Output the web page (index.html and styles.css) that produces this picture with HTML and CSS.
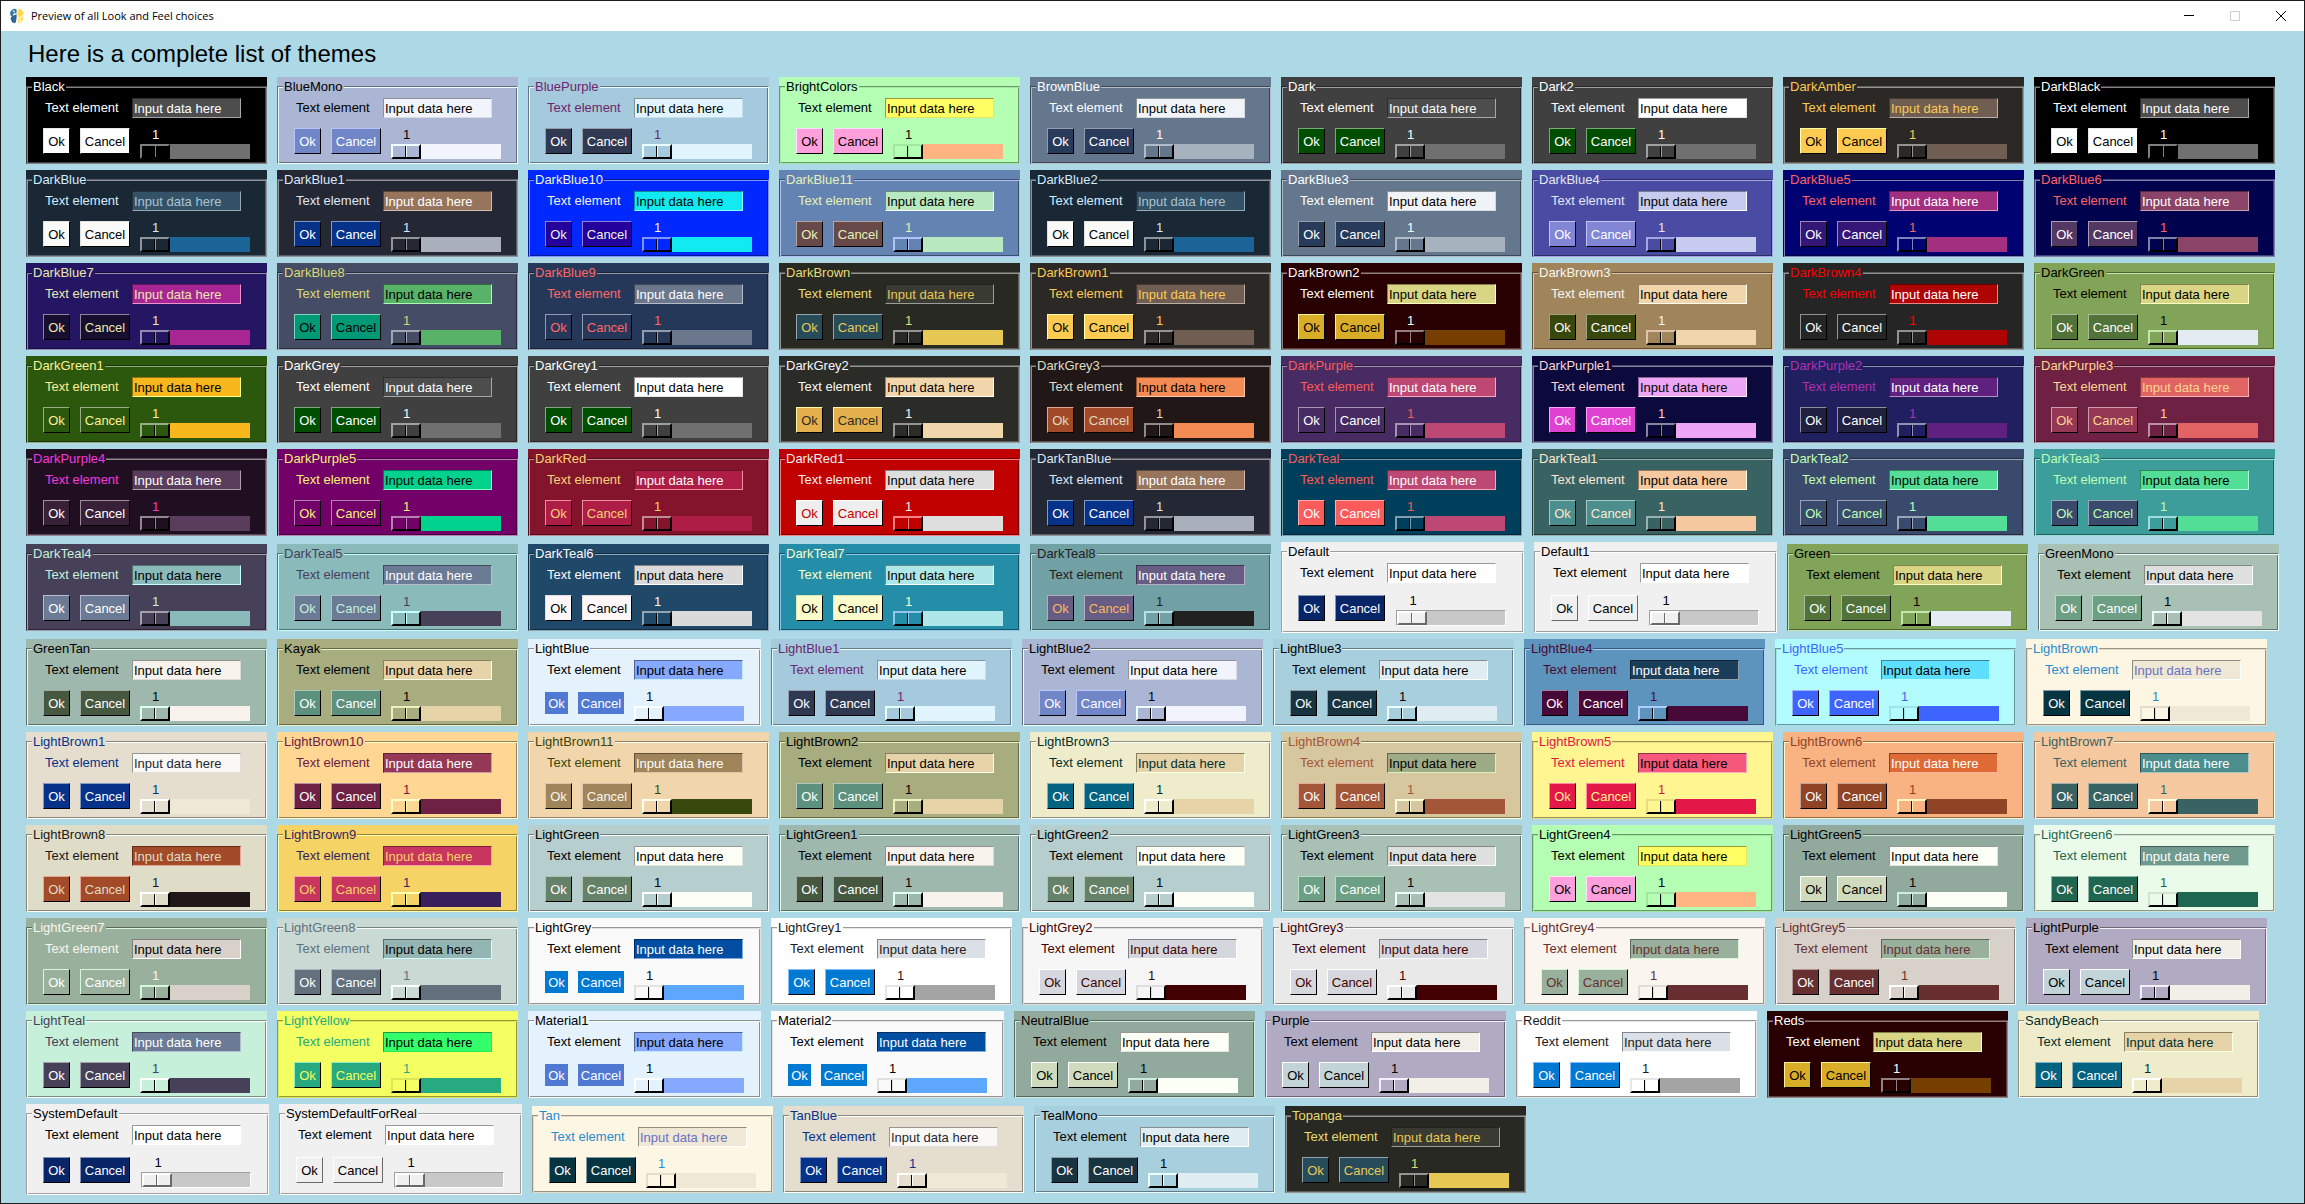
FILE: index.html
```html
<!DOCTYPE html>
<html lang="en">
<head>
<meta charset="utf-8">
<meta name="viewport" content="width=device-width, initial-scale=1">
<title>Preview of all Look and Feel choices</title>
<link rel="stylesheet" href="styles.css">
</head>
<body>
<div class="window">
  <header class="titlebar">
    <svg class="titlebar-logo" viewBox="0 0 16 16" width="16" height="16" aria-hidden="true">
      <path d="M7.6 1.6V5.2H4.8L3.6 8.6 1.8 8C.6 5.400 .8 3 3.200 2 4.600 .6 6.600 .4 7.600 1.600Z" fill="#3a76a8"/>
      <path d="M2.600 8.600 7.600 6V10L6.800 14.600C4.800 15.600 2.400 14.800 2.200 12 1.200 11 1.600 9.400 2.600 8.600Z" fill="#2f6593"/>
      <path d="M8.600 2C10.400 .4 13 1 13.400 3.200 15 4.200 15 6.400 13.600 7.400L8.600 9.600V5.600Z" fill="#ffd94a"/>
      <path d="M8.600 10.400 13.600 8C15 9.200 14.800 11.400 13.800 12.200 13.400 14.600 10.600 15.800 8.600 14.200Z" fill="#ffe375"/>
      <circle cx="5" cy="3.400" r=".8" fill="#fff"/>
      <circle cx="11" cy="12.800" r=".8" fill="#fff"/>
    </svg>
    <span class="titlebar-text">Preview of all Look and Feel choices</span>
    <button class="titlebar-button" type="button" aria-label="Minimize">
      <svg viewBox="0 0 10 10" width="10" height="10"><path d="M0 4.500H10" stroke="#000"/></svg>
    </button>
    <button class="titlebar-button" type="button" aria-label="Maximize" disabled>
      <svg viewBox="0 0 10 10" width="10" height="10"><path d="M.5 .5H9.500V9.500H.5Z" fill="none" stroke="#ccc"/></svg>
    </button>
    <button class="titlebar-button" type="button" aria-label="Close">
      <svg viewBox="0 0 10 10" width="10" height="10"><path d="M0 0 10 10M10 0 0 10" stroke="#000"/></svg>
    </button>
  </header>
  <main class="content">
    <h1 class="heading">Here is a complete list of themes</h1>
    <div class="themes" id="themes"></div>
  </main>
</div>
<script src="themes.js"></script>
</body>
</html>
```
FILE: styles.css
```css
* {
  box-sizing: border-box;
}

body {
  margin: 0;
  font-family: "Liberation Sans", Arial, sans-serif;
  font-size: 13px;
  color: #000;
}

.window {
  display: flex;
  flex-direction: column;
  min-height: 100vh;
  border: 1px solid #1c1c1c;
  background: #add8e6;
}

/* Title bar */

.titlebar {
  display: flex;
  align-items: center;
  height: 30px;
  padding-left: 8px;
  background: #fff;
}

.titlebar-logo {
  flex: none;
}

.titlebar-text {
  flex: 1;
  padding-left: 6px;
  font-family: "Open Sans", "Segoe UI", sans-serif;
  font-size: 11px;
  line-height: 16px;
}

.titlebar-button {
  display: flex;
  align-items: center;
  justify-content: center;
  width: 46px;
  height: 30px;
  padding: 0;
  border: 0;
  background: none;
}

/* Page */

.content {
  padding: 0 25px 8px;
}

.heading {
  margin: 0;
  padding: 8px 0 8px 2px;
  font-size: 24px;
  font-weight: 400;
  line-height: 30px;
}

.themes {
  display: flex;
  flex-direction: column;
  gap: 6px;
}

.theme-row {
  display: flex;
  flex-wrap: wrap;
  align-items: center;
  gap: 6px 10px;
}

/* Theme preview */

.card {
  background: var(--bg);
  color: var(--text);
}

.frame {
  min-width: 0;
  margin: 0;
  padding: 3px 16px 4px 5px;
  border: 1px solid;
  border-color: var(--bg-dark) var(--bg-light) var(--bg-light) var(--bg-dark);
  box-shadow: inset 1px 1px var(--bg-light), inset -1px -1px var(--bg-dark);
}

.frame-title {
  padding: 1px 1px 0;
  line-height: 17px;
  background: var(--bg);
}

.field {
  display: flex;
  align-items: center;
  padding-left: 13px;
}

.field-label {
  width: 77px;
  margin-right: 10px;
  line-height: 20px;
}

.field-input {
  width: 109px;
  height: 20px;
  padding: 0 1px;
  border: 1px solid;
  border-color: var(--input-dark) var(--input-light) var(--input-light) var(--input-dark);
  border-radius: 0;
  background: var(--input);
  color: var(--input-text);
  font: inherit;
  outline: 0;
}

.controls {
  display: flex;
  align-items: center;
  gap: 10px;
  padding-left: 11px;
  margin-top: 5px;
}

.button {
  height: 26px;
  padding: 0;
  border: 1px solid;
  border-color: var(--button-light) var(--button-shade) var(--button-shade) var(--button-light);
  background: var(--button);
  color: var(--button-text);
  font: inherit;
  text-align: center;
}

.button-ok {
  width: 27px;
}

.button-cancel {
  width: 50px;
}

.card-flat .button {
  height: 22px;
  border: 0;
}

.card-flat .button-ok {
  width: 23px;
}

.card-flat .button-cancel {
  width: 46px;
}

/* Slider */

.scale {
  display: flex;
  flex-direction: column;
  padding-top: 2px;
}

.scale-value {
  width: 31px;
  line-height: 19px;
  text-align: center;
}

.scale-input {
  width: 110px;
  height: 15px;
  margin: 0;
  appearance: none;
  background: var(--scroll);
  outline: 0;
}

.scale-input::-webkit-slider-thumb {
  appearance: none;
  width: 30px;
  height: 15px;
  border: 2px solid;
  border-color: var(--bg-light) var(--thumb-shade) var(--thumb-shade) var(--bg-light);
  background:
    linear-gradient(90deg, transparent 12px, var(--thumb-shade) 12px 13px, var(--bg-light) 13px 14px, transparent 14px)
    var(--bg);
}

.card-system .scale {
  padding: 3px 1px 2px;
}

.card-system .scale-value {
  width: 34px;
}

.card-system .scale-input {
  height: 16px;
  border: 1px solid;
  border-color: var(--bg-dark) var(--bg-light) var(--bg-light) var(--bg-dark);
}

.card-system .scale-input::-webkit-slider-thumb {
  height: 14px;
}
```
FILE: themes.js
```js
// name, background, text, input, input text, slider trough, button text, button, [style]
const THEMES = `
Black #000000 #ffffff #4d4d4d #ffffff #707070 #000000 #ffffff
BlueMono #aab6d3 #000000 #f1f4fc #000000 #f1f4fc #ffffff #7186c7
BluePurple #a5cadd #6e266e #e0f5ff #000000 #e0f5ff #ffffff #303952
BrightColors #b4ffb4 #000000 #ffff64 #000000 #ffb482 #000000 #ffa0dc
BrownBlue #64778d #ffffff #f0f3f7 #000000 #a6b2be #ffffff #283b5b
Dark #404040 #ffffff #4d4d4d #ffffff #707070 #ffffff #004f00
Dark2 #404040 #ffffff #ffffff #000000 #707070 #ffffff #004f00
DarkAmber #2c2825 #fdcb52 #705e52 #fdcb52 #705e52 #000000 #fdcb52
DarkBlack #000000 #ffffff #4d4d4d #ffffff #707070 #000000 #ffffff
DarkBlue #1a2835 #d1ecff #335267 #acc2d0 #1b6497 #000000 #fafaf8
DarkBlue1 #242834 #dfe6f8 #97755c #ffffff #a9afbb #ffffff #063289
DarkBlue10 #0028ff #f1f4df #10eaf0 #000000 #10eaf0 #f1f4df #24009c
DarkBlue11 #6384b3 #e6f0b6 #b8e9c0 #000000 #b8e9c0 #e6f0b6 #684949
DarkBlue2 #1a2835 #d1ecff #335267 #acc2d0 #1b6497 #000000 #fafaf8
DarkBlue3 #64778d #ffffff #f0f3f7 #000000 #a6b2be #ffffff #283b5b
DarkBlue4 #494ca2 #e3e7f1 #c6cbef #000000 #c6cbef #ffffff #8186d5
DarkBlue5 #000272 #ff6363 #a32f80 #ffffff #a32f80 #ffffff #341677
DarkBlue6 #01024e #ff6464 #8b4367 #ffffff #8b4367 #ffffff #543864
DarkBlue7 #241663 #eae7af #a72693 #eae7af #a72693 #eae7af #160f30
DarkBlue8 #454d66 #d9d872 #58b368 #000000 #58b368 #000000 #009975
DarkBlue9 #263859 #ff6768 #6b778d #ffffff #6b778d #ff6768 #263859
DarkBrown #282923 #e7db74 #393a32 #e7c855 #e7c855 #e7c855 #284b5a
DarkBrown1 #2c2825 #fdcb52 #705e52 #fdcb52 #705e52 #000000 #fdcb52
DarkBrown2 #280001 #ffffff #d8d584 #000000 #763e00 #000000 #daad28
DarkBrown3 #a0855b #f9f6f2 #f1d6ab #000000 #f1d6ab #ffffff #38470b
DarkBrown4 #252525 #ff0000 #af0404 #ffffff #af0404 #ffffff #252525
DarkGreen #82a459 #000000 #d8d584 #000000 #e3ecf3 #ffffff #517239
DarkGreen1 #2b580c #fdef96 #f7b71d #000000 #f7b71d #fdef96 #2b580c
DarkGrey #404040 #ffffff #4d4d4d #ffffff #707070 #ffffff #004f00
DarkGrey1 #404040 #ffffff #ffffff #000000 #707070 #ffffff #004f00
DarkGrey2 #2b2b28 #f8f8f8 #f1d6ab #000000 #f1d6ab #2b2b28 #e3b04b
DarkGrey3 #211717 #dfddc7 #f58b54 #000000 #f58b54 #dfddc7 #a34a28
DarkPurple #472b62 #fb5b5a #bc4873 #ffffff #bc4873 #ffffff #472b62
DarkPurple1 #0c093c #fad6d6 #eea5f6 #000000 #eea5f6 #ffffff #df42d1
DarkPurple2 #202060 #b030b0 #602080 #ffffff #602080 #ffffff #202040
DarkPurple3 #6e2142 #ffd692 #e16363 #ffd692 #e16363 #ffd692 #943855
DarkPurple4 #200f21 #f638dc #5a3d5c #ffffff #5a3d5c #ffffff #382039
DarkPurple5 #730068 #f6f078 #01d28e #000000 #01d28e #f6f078 #730068
DarkRed #83142c #f9d276 #ad1d45 #ffffff #ad1d45 #f9d276 #ad1d45
DarkRed1 #c10000 #eeeeee #dedede #000000 #dedede #c10000 #eeeeee
DarkTanBlue #242834 #dfe6f8 #97755c #ffffff #a9afbb #ffffff #063289
DarkTeal #003f5c #fb5b5a #bc4873 #ffffff #bc4873 #ffffff #fb5b5a
DarkTeal1 #396362 #ffe7d1 #f6c89f #000000 #f6c89f #ffe7d1 #4b8e8d
DarkTeal2 #394a6d #c0ffb3 #52de97 #000000 #52de97 #c0ffb3 #394a6d
DarkTeal3 #3c9d9b #c0ffb3 #52de97 #000000 #52de97 #c0ffb3 #394a6d
DarkTeal4 #464159 #c7f0db #8bbabb #000000 #8bbabb #ffffff #6c7b95
DarkTeal5 #8bbabb #464159 #6c7b95 #ffffff #464159 #c7f0db #6c7b95
DarkTeal6 #204969 #fff7f7 #dadada #000000 #dadada #000000 #fff7f7
DarkTeal7 #248ea9 #fafdcb #aee7e8 #000000 #aee7e8 #000000 #fafdcb
DarkTeal8 #71a0a5 #212121 #665c84 #ffffff #212121 #fab95b #665c84
Default #f0f0f0 #000000 #ffffff #000000 #c8c8c8 #ffffff #082567 system
Default1 #f0f0f0 #000000 #ffffff #000000 #c8c8c8 #000000 #f0f0f0 system
Green #82a459 #000000 #d8d584 #000000 #e3ecf3 #ffffff #517239
GreenMono #a8c1b4 #000000 #dde0de #000000 #e3e3e3 #ffffff #6d9f85
GreenTan #9fb8ad #000000 #f7f3ec #000000 #f7f3ec #ffffff #475841
Kayak #a7ad7f #000000 #e6d3a8 #000000 #e6d3a8 #ffffff #5d907d
LightBlue #e3f2fd #000000 #86a8ff #000000 #86a8ff #ffffff #5079d3 flat
LightBlue1 #a5cadd #6e266e #e0f5ff #000000 #e0f5ff #ffffff #303952
LightBlue2 #aab6d3 #000000 #f1f4fc #000000 #f1f4fc #ffffff #7186c7
LightBlue3 #a8cfdd #000000 #dfedf2 #000000 #dfedf2 #ffffff #183440
LightBlue4 #5c94bd #470938 #1a3e59 #ffffff #470938 #ffffff #470938
LightBlue5 #b2fcff #3e64ff #5edfff #000000 #3e64ff #ffffff #3e64ff
LightBrown #fdf6e3 #268bd1 #eee8d5 #6c71c3 #eee8d5 #ffffff #063542
LightBrown1 #e5dece #063289 #f9f8f4 #242834 #eee8d5 #ffffff #063289
LightBrown10 #ffd692 #6e2142 #943855 #ffffff #6e2142 #ffffff #6e2142
LightBrown11 #f1d6ab #38470b #a0855b #ffffff #38470b #f9f6f2 #a0855b
LightBrown2 #a7ad7f #000000 #e6d3a8 #000000 #e6d3a8 #ffffff #5d907d
LightBrown3 #efeccb #012f2f #e6d3a8 #012f2f #e6d3a8 #ffffff #046380
LightBrown4 #d7c79e #a35638 #9dab86 #000000 #a35638 #ffffff #a35638
LightBrown5 #fff591 #e41749 #f5587b #000000 #e41749 #fff591 #e41749
LightBrown6 #f9b282 #8f4426 #de6b35 #ffffff #8f4426 #ffffff #8f4426
LightBrown7 #f6c89f #396362 #4b8e8d #ffffff #396362 #ffffff #396362
LightBrown8 #dfddc7 #211717 #a34a28 #dfddc7 #211717 #dfddc7 #a34a28
LightBrown9 #f6d365 #3a1f5d #c83660 #f6d365 #3a1f5d #f6d365 #c83660
LightGreen #b7cece #000000 #fdfff7 #000000 #fdfff7 #ffffff #658268
LightGreen1 #9fb8ad #000000 #f7f3ec #000000 #f7f3ec #ffffff #475841
LightGreen2 #b7cece #000000 #fdfff7 #000000 #fdfff7 #ffffff #658268
LightGreen3 #a8c1b4 #000000 #dde0de #000000 #e3e3e3 #ffffff #6d9f85
LightGreen4 #b4ffb4 #000000 #ffff64 #000000 #ffb482 #000000 #ffa0dc
LightGreen5 #92aa9d #000000 #fcfff6 #000000 #fcfff6 #000000 #d0dbbd
LightGreen6 #eafbea #1f6650 #6f9a8d #ffffff #1f6650 #ffffff #1f6650
LightGreen7 #99b19c #faf5ef #d7d1c9 #000000 #d7d1c9 #ffffff #99b19c
LightGreen8 #c8dad3 #63707e #93b5b3 #000000 #63707e #ffffff #63707e
LightGrey #fafafa #000000 #004ea1 #ffffff #5ea7ff #ffffff #0079d3 flat
LightGrey1 #ffffff #1a1a1b #dae0e6 #222222 #a5a4a4 #ffffff #0079d3
LightGrey2 #f6f6f6 #420000 #d4d7dd #420000 #420000 #420000 #d4d7dd
LightGrey3 #eae9e9 #420000 #d4d7dd #420000 #420000 #420000 #d4d7dd
LightGrey4 #faf5ef #672f2f #99b19c #672f2f #672f2f #672f2f #99b19c
LightGrey5 #d7d1c9 #672f2f #99b19c #672f2f #672f2f #ffffff #672f2f
LightPurple #b0aac2 #000000 #f2efe8 #000000 #f2efe8 #000000 #c2d4d8
LightTeal #c7f0db #464159 #6c7b95 #ffffff #464159 #ffffff #464159
LightYellow #f4ff61 #27aa80 #32ff6a #000000 #27aa80 #f4ff61 #27aa80
Material1 #e3f2fd #000000 #86a8ff #000000 #86a8ff #ffffff #5079d3 flat
Material2 #fafafa #000000 #004ea1 #ffffff #5ea7ff #ffffff #0079d3 flat
NeutralBlue #92aa9d #000000 #fcfff6 #000000 #fcfff6 #000000 #d0dbbd
Purple #b0aac2 #000000 #f2efe8 #000000 #f2efe8 #000000 #c2d4d8
Reddit #ffffff #1a1a1b #dae0e6 #222222 #a5a4a4 #ffffff #0079d3
Reds #280001 #ffffff #d8d584 #000000 #763e00 #000000 #daad28
SandyBeach #efeccb #012f2f #e6d3a8 #012f2f #e6d3a8 #ffffff #046380
SystemDefault #f0f0f0 #000000 #ffffff #000000 #c8c8c8 #ffffff #082567 system
SystemDefaultForReal #f0f0f0 #000000 #ffffff #000000 #c8c8c8 #000000 #f0f0f0 system
Tan #fdf6e3 #268bd1 #eee8d5 #6c71c3 #eee8d5 #ffffff #063542
TanBlue #e5dece #063289 #f9f8f4 #242834 #eee8d5 #ffffff #063289
TealMono #a8cfdd #000000 #dfedf2 #000000 #dfedf2 #ffffff #183440
Topanga #282923 #e7db74 #393a32 #e7c855 #e7c855 #e7c855 #284b5a
`.trim().split("\n").map((line) => line.split(" "));

const PER_ROW = 9;
const SYSTEM_FACE = "#f0f0f0";

const channels = (hex) => [1, 3, 5].map((i) => parseInt(hex.slice(i, i + 2), 16));
const rgb = (values) => `rgb(${values.map((v) => Math.round(Math.min(255, v))).join(",")})`;

// Highlight edge of a raised or sunken surface.
function light(hex) {
  if (hex === SYSTEM_FACE) return "#fff";
  const c = channels(hex);
  if (c[1] > 242) return rgb(c.map((v) => v * 0.9));
  return rgb(c.map((v) => Math.max(v * 1.4, (255 + v) / 2)));
}

// Shadow edge; very dark surfaces get a shadow lighter than themselves.
function dark(hex) {
  if (hex === SYSTEM_FACE) return "#a0a0a0";
  const c = channels(hex);
  const luminance = 0.5 * c[0] * c[0] + c[1] * c[1] + 0.28 * c[2] * c[2];
  if (luminance < 0.05 * 255 * 255) return rgb(c.map((v) => (255 + 3 * v) / 4));
  return rgb(c.map((v) => v * 0.6));
}

const shade = (hex) => (hex === SYSTEM_FACE ? "#696969" : "#000");

function card([name, bg, text, input, inputText, scroll, buttonText, button, style]) {
  const el = document.createElement("section");
  el.className = style ? `card card-${style}` : "card";
  const vars = {
    "bg": bg, "bg-light": light(bg), "bg-dark": dark(bg), "text": text,
    "input": input, "input-light": style === "system" ? "#fff" : light(input),
    "input-dark": dark(input), "input-text": inputText, "scroll": scroll,
    "button": button, "button-light": light(button), "button-shade": shade(button),
    "button-text": buttonText, "thumb-shade": shade(bg),
  };
  for (const [key, value] of Object.entries(vars)) el.style.setProperty(`--${key}`, value);
  el.innerHTML = `
    <fieldset class="frame">
      <legend class="frame-title">${name}</legend>
      <div class="field">
        <label class="field-label" for="${name}-text">Text element</label>
        <input class="field-input" id="${name}-text" type="text" value="Input data here">
      </div>
      <div class="controls">
        <button class="button button-ok" type="button">Ok</button>
        <button class="button button-cancel" type="button">Cancel</button>
        <div class="scale">
          <output class="scale-value" for="${name}-scale">1</output>
          <input class="scale-input" id="${name}-scale" type="range" min="1" max="10" value="1" aria-label="${name} slider">
        </div>
      </div>
    </fieldset>`;
  const range = el.querySelector(".scale-input");
  range.addEventListener("input", () => {
    el.querySelector(".scale-value").textContent = range.value;
  });
  return el;
}

const container = document.getElementById("themes");
for (let i = 0; i < THEMES.length; i += PER_ROW) {
  const row = document.createElement("div");
  row.className = "theme-row";
  row.append(...THEMES.slice(i, i + PER_ROW).map(card));
  container.append(row);
}
```
